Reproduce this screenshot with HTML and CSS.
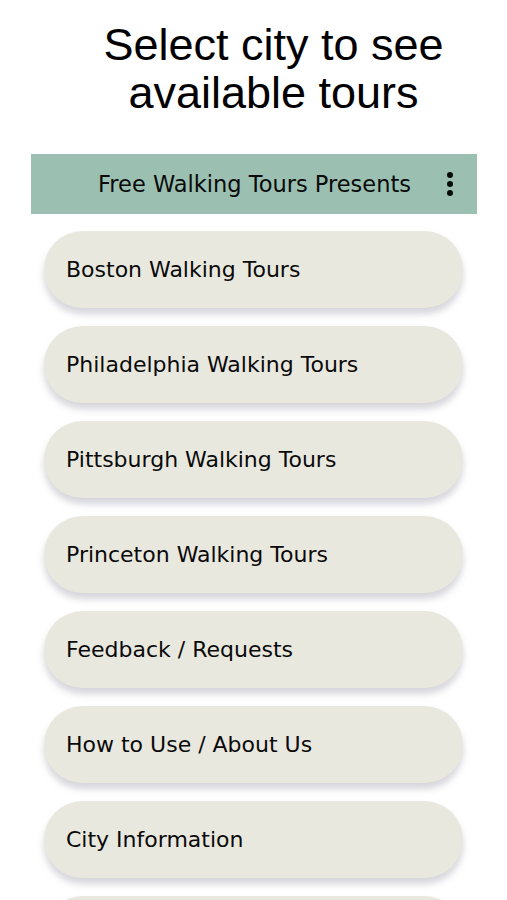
FILE: index.html
```html
<!DOCTYPE html>
<html>
  <head>
    <title>Free Walking Tours</title>
    <link rel="stylesheet" href="styles.css">
  </head>
  <body>
    <h1 class="title">Select city to see available tours</h1>
    <div class="bar">
      <span class="bar-title">Free Walking Tours Presents</span>
      <span class="menu"><i></i><i></i><i></i></span>
    </div>
    <div class="list">
      <a class="item" href="#">Boston Walking Tours</a>
      <a class="item" href="#">Philadelphia Walking Tours</a>
      <a class="item" href="#">Pittsburgh Walking Tours</a>
      <a class="item" href="#">Princeton Walking Tours</a>
      <a class="item" href="#">Feedback / Requests</a>
      <a class="item" href="#">How to Use / About Us</a>
      <a class="item" href="#">City Information</a>
      <a class="item" href="#"></a>
    </div>
  </body>
</html>
```

FILE: styles.css
```css
body {
  margin: 0;
  background: #fff;
  height: 900px;
  overflow: hidden;
}
.title {
  margin: 21px 0 0;
  padding-left: 40px;
  text-align: center;
  font-family: "Liberation Sans", Arial, sans-serif;
  font-weight: normal;
  font-size: 45px;
  line-height: 48px;
  color: #000;
}
.bar {
  margin: 37px 30px 0 31px;
  height: 60px;
  background: #9bc0b2;
  display: flex;
  align-items: center;
  font-family: "DejaVu Sans", sans-serif;
  font-size: 22.5px;
  color: #0a0a0a;
}
.bar-title {
  flex: 1;
  padding-left: 67px;
}
.menu {
  display: flex;
  flex-direction: column;
  gap: 3px;
  margin-right: 24px;
}
.menu i {
  width: 6px;
  height: 6px;
  border-radius: 50%;
  background: #0a0a0a;
}
.list {
  display: flex;
  flex-direction: column;
  gap: 18px;
  padding: 17px 44px 0;
}
.item {
  display: flex;
  align-items: center;
  height: 77px;
  padding-left: 22px;
  border-radius: 39px;
  background: #e9e8df;
  box-shadow: 0 6px 7px rgba(150, 150, 165, 0.4);
  font-family: "DejaVu Sans", sans-serif;
  font-size: 22px;
  color: #0a0a0a;
  text-decoration: none;
  flex-shrink: 0;
}
```
